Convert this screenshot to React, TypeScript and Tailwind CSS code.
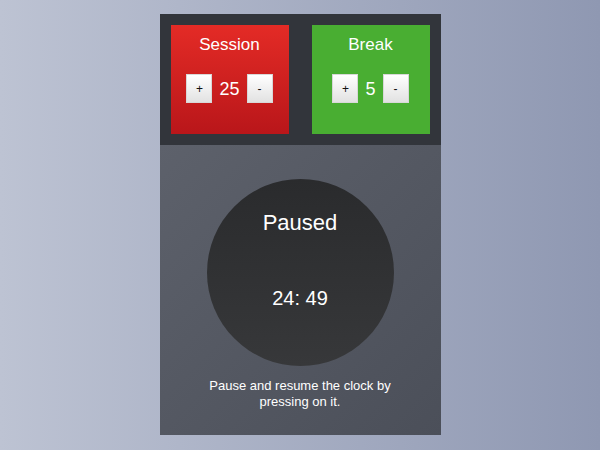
import { useState } from 'react';

function Counter({ label, value, className }: { label: string; value: number; className: string }) {
  return (
    <div className={`flex h-[109px] w-[118px] flex-col items-center pt-[10px] text-white ${className}`}>
      <div className="text-[17px] leading-[20px]">{label}</div>
      <div className="mt-[19px] flex items-center gap-[7px]">
        <button className="flex h-[29px] w-[26px] items-center justify-center border border-[#d8d8d8] bg-gradient-to-b from-[#ffffff] to-[#e2e2e2] text-[12px] leading-none text-[#111]">
          +
        </button>
        <span className="text-[18px] leading-none">{value}</span>
        <button className="flex h-[29px] w-[26px] items-center justify-center border border-[#d8d8d8] bg-gradient-to-b from-[#ffffff] to-[#e2e2e2] text-[12px] leading-none text-[#111]">
          -
        </button>
      </div>
    </div>
  );
}

export default function App() {
  const [paused] = useState(true);

  return (
    <div className="h-[450px] w-[600px] bg-gradient-to-r from-[#bdc3d3] to-[#8f98b2] pt-[14px] font-['Liberation_Sans',Arial,sans-serif]">
      <div className="mx-auto w-[281px]">
        <div className="flex h-[131px] justify-between bg-[#32353b] px-[11px] pt-[11px]">
          <Counter label="Session" value={25} className="bg-gradient-to-b from-[#e42b26] to-[#b9161a]" />
          <Counter label="Break" value={5} className="bg-[#49ae32]" />
        </div>
        <div className="flex h-[290px] flex-col items-center bg-gradient-to-br from-[#5d616b] to-[#4b4f59] pt-[34px]">
          <div className="flex h-[187px] w-[187px] flex-col items-center rounded-full bg-gradient-to-b from-[#2a2b2d] to-[#37383a] pt-[31px] text-white">
            <div className="text-[22px] leading-[26px]">{paused ? 'Paused' : 'Session'}</div>
            <div className="mt-[50px] text-[20px] leading-[24px]">24: 49</div>
          </div>
          <p className="mt-[12px] w-[200px] text-center text-[13px] leading-[16px] text-white">
            Pause and resume the clock by pressing on it.
          </p>
        </div>
      </div>
    </div>
  );
}
